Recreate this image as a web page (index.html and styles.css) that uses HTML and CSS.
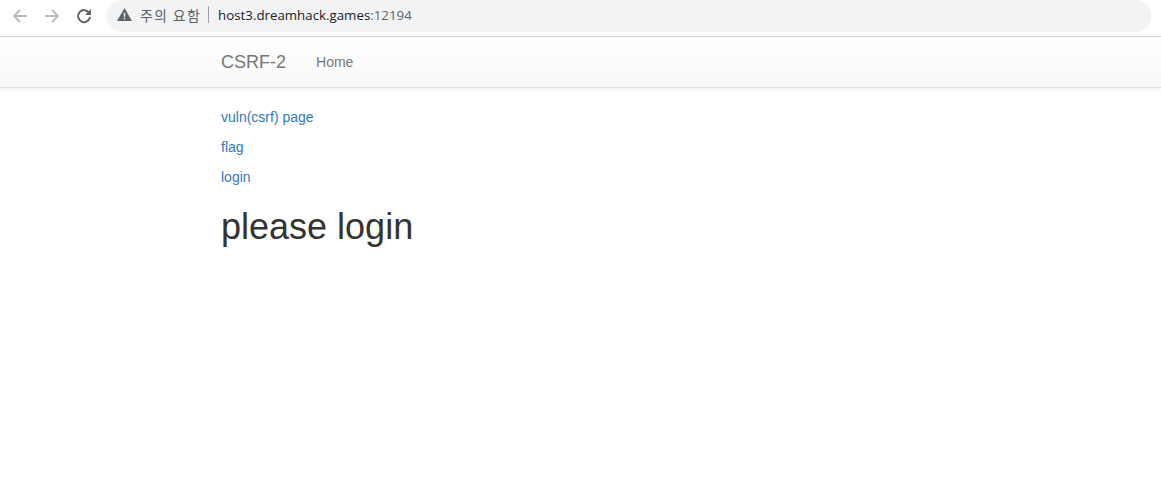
FILE: index.html
```html
<!DOCTYPE html>
<html lang="en">
<head>
    <meta charset="UTF-8">
    <meta name="viewport" content="width=device-width, initial-scale=1.0">
    <title>CSRF-2</title>
    <link rel="stylesheet" href="styles.css">
</head>
<body>
    <div class="toolbar">
        <button class="nav-btn">
            <svg width="16" height="16" viewBox="0 0 16 16"><path d="M15 8H2M8 2 2 8l6 6" fill="none" stroke="#b9bcc0" stroke-width="2"/></svg>
        </button>
        <button class="nav-btn">
            <svg width="16" height="16" viewBox="0 0 16 16"><path d="M1 8h13M8 2l6 6-6 6" fill="none" stroke="#b9bcc0" stroke-width="2"/></svg>
        </button>
        <button class="nav-btn">
            <svg width="16" height="16" viewBox="0 0 16 16"><path d="M13.2 5A6 6 0 1 0 14 9" fill="none" stroke="#5f6368" stroke-width="2"/><path d="M15 1v6H9z" fill="#5f6368"/></svg>
        </button>
        <div class="address">
            <svg class="warn" width="15" height="13" viewBox="0 0 16 14"><path d="M8 0 16 14H0z" fill="#5f6368"/><path d="M7.2 5h1.6v4.4H7.2zM7.2 10.4h1.6V12H7.2z" fill="#f1f3f4"/></svg>
            <span class="warn-text">주의 요함</span>
            <span class="divider"></span>
            <span class="host">host3.dreamhack.games</span><span class="port">:12194</span>
        </div>
    </div>
    <nav class="navbar">
        <div class="container nav-inner">
            <a class="brand" href="#">CSRF-2</a>
            <a class="nav-link" href="#">Home</a>
        </div>
    </nav>
    <div class="container">
        <ul class="links">
            <li><a href="#">vuln(csrf) page</a></li>
            <li><a href="#">flag</a></li>
            <li><a href="#">login</a></li>
        </ul>
        <h1>please login</h1>
    </div>
</body>
</html>
```

FILE: styles.css
```css
* {
    box-sizing: border-box;
}
body {
    margin: 0;
    font-family: "Liberation Sans", Arial, sans-serif;
    font-size: 14px;
    color: #333;
    background-color: #fff;
}
a {
    color: #337ab7;
    text-decoration: none;
}
.toolbar {
    display: flex;
    align-items: center;
    height: 37px;
    padding: 0 10px 5px 4px;
    border-bottom: 1px solid #dadce0;
}
.nav-btn {
    display: flex;
    justify-content: center;
    align-items: center;
    width: 32px;
    height: 32px;
    padding: 0;
    border: none;
    background: none;
}
.address {
    display: flex;
    align-items: center;
    width: 1046px;
    height: 32px;
    margin-left: 6px;
    padding: 0 0 2px 10px;
    border-radius: 16px;
    background-color: #f1f3f4;
    font-family: "Open Sans", "Noto Sans CJK KR", sans-serif;
    font-size: 13.3px;
}
.warn {
    margin-left: 1px;
}
.warn-text {
    margin-left: 8px;
    color: #5f6368;
    font-family: "Noto Sans CJK KR", sans-serif;
    font-size: 14px;
    letter-spacing: 1.3px;
}
.divider {
    width: 1px;
    height: 17px;
    margin: 0 9px 0 7px;
    background-color: #9aa0a6;
}
.host {
    color: #202124;
}
.port {
    color: #5f6368;
}
.navbar {
    height: 51px;
    border-bottom: 1px solid #e0e0e0;
    background-image: linear-gradient(to bottom, #fff 0, #f8f8f8 100%);
    box-shadow: 0 1px 5px rgba(0, 0, 0, 0.075);
}
.container {
    width: 750px;
    margin-left: 206px;
    padding: 0 15px;
}
.nav-inner {
    display: flex;
    align-items: center;
    height: 50px;
}
.brand {
    color: #777;
    font-size: 18px;
}
.nav-link {
    margin-left: 30px;
    color: #777;
}
.links {
    margin: 0;
    padding: 14px 0 0;
    list-style: none;
}
.links li {
    height: 30px;
    line-height: 30px;
}
h1 {
    margin: 15px 0 10px;
    font-size: 36px;
    font-weight: 500;
    line-height: 1.1;
    color: #333;
}
```
